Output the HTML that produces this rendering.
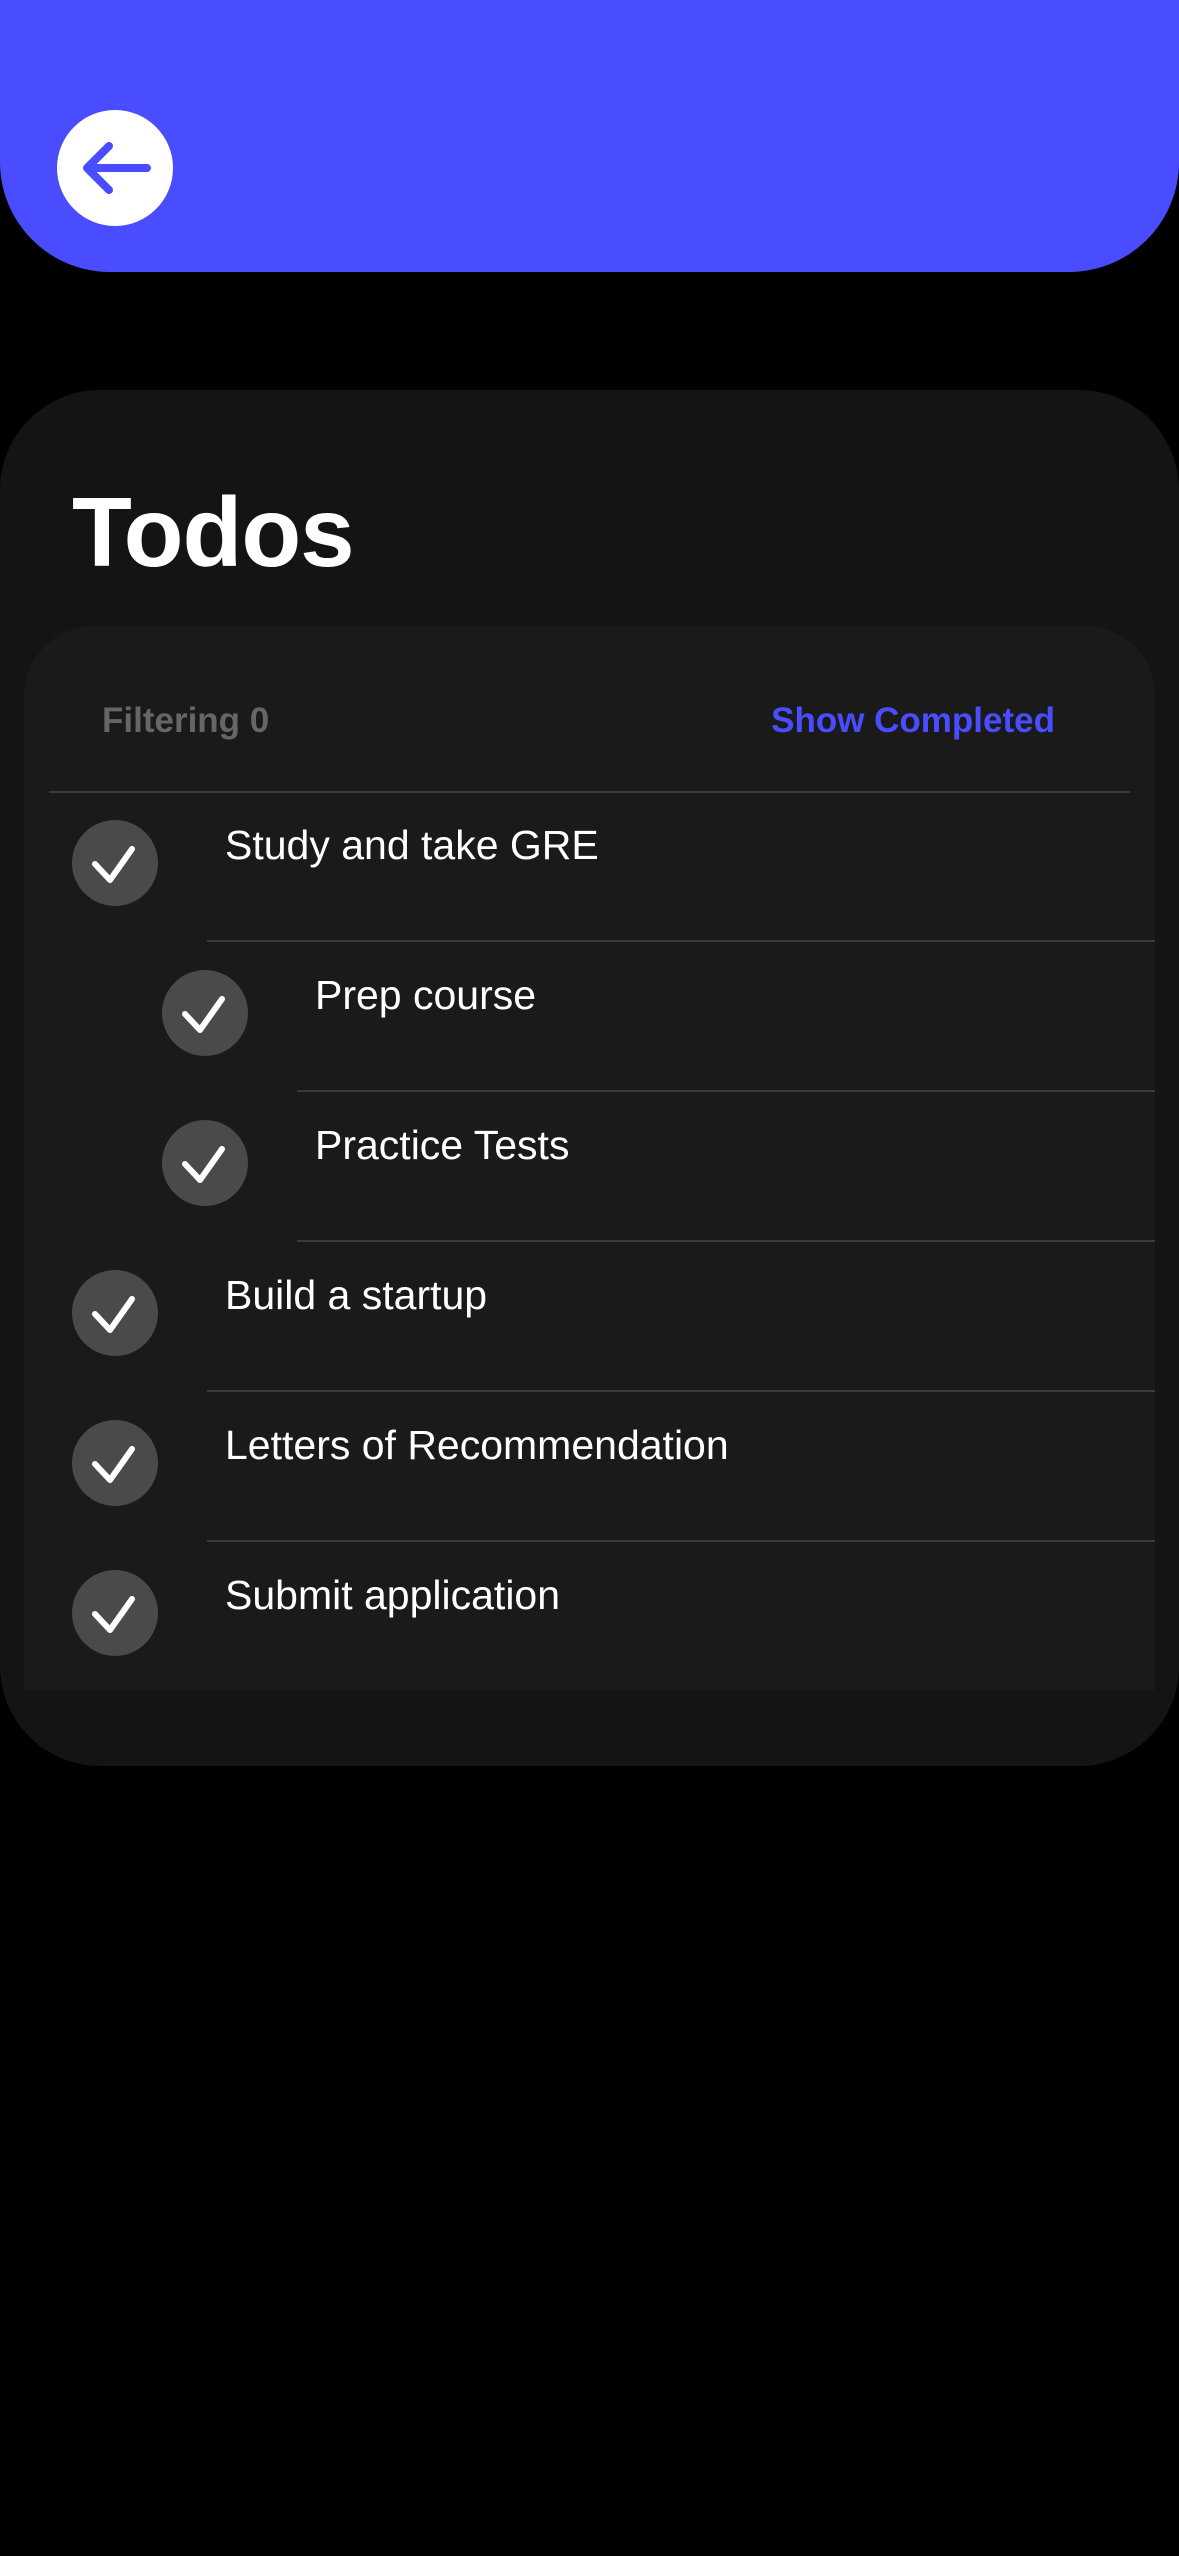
<!DOCTYPE html>
<html><head><style>
*{margin:0;padding:0;box-sizing:border-box}
body{width:1179px;height:2556px;background:#000;position:relative;overflow:hidden;font-family:"Liberation Sans",sans-serif}
.hdr{position:absolute;left:0;top:0;width:1179px;height:272px;background:#4a4dff;border-radius:0 0 110px 110px}
.back{position:absolute;left:57px;top:110px;width:116px;height:116px;border-radius:50%;background:#fff}
.card{position:absolute;left:0;top:390px;width:1179px;height:1376px;background:#141414;border-radius:100px}
.title{position:absolute;left:72px;top:476px;font-size:98px;font-weight:bold;color:#fff;letter-spacing:-1px}
.inner{position:absolute;left:24px;top:626px;width:1131px;height:1064px;background:#1a1a1a;border-radius:70px 70px 0 0}
.filt{position:absolute;left:102px;top:701px;font-size:35px;font-weight:bold;color:#666}
.show{position:absolute;right:124px;top:701px;font-size:35px;font-weight:bold;color:#4a4dff}
.div{position:absolute;height:2px;background:#3a3a3a}
.c{position:absolute;width:86px;height:86px;border-radius:50%;background:#4a4a4a}
.c svg{position:absolute;left:0;top:0}
.t{position:absolute;font-size:41px;color:#fff}
</style></head><body>
<div class="hdr"></div>
<div class="back"><svg width="116" height="116" viewBox="0 0 116 116"><path d="M30 58H90M30 58L52 36M30 58L52 80" stroke="#4a4dff" stroke-width="8" stroke-linecap="round" stroke-linejoin="round" fill="none"/></svg></div>
<div class="card"></div>
<div class="title">Todos</div>
<div class="inner"></div>
<div class="filt">Filtering 0</div>
<div class="show">Show Completed</div>
<div class="div" style="left:49px;top:791px;width:1081px"></div>

<div class="c" style="left:72px;top:820px"><svg width="86" height="86"><path d="M23 44L38 60L60 29" stroke="#fff" stroke-width="6" stroke-linecap="round" stroke-linejoin="round" fill="none"/></svg></div>
<div class="t" style="left:225px;top:822px">Study and take GRE</div>
<div class="div" style="left:207px;top:940px;width:948px"></div>

<div class="c" style="left:162px;top:970px"><svg width="86" height="86"><path d="M23 44L38 60L60 29" stroke="#fff" stroke-width="6" stroke-linecap="round" stroke-linejoin="round" fill="none"/></svg></div>
<div class="t" style="left:315px;top:972px">Prep course</div>
<div class="div" style="left:297px;top:1090px;width:858px"></div>

<div class="c" style="left:162px;top:1120px"><svg width="86" height="86"><path d="M23 44L38 60L60 29" stroke="#fff" stroke-width="6" stroke-linecap="round" stroke-linejoin="round" fill="none"/></svg></div>
<div class="t" style="left:315px;top:1122px">Practice Tests</div>
<div class="div" style="left:297px;top:1240px;width:858px"></div>

<div class="c" style="left:72px;top:1270px"><svg width="86" height="86"><path d="M23 44L38 60L60 29" stroke="#fff" stroke-width="6" stroke-linecap="round" stroke-linejoin="round" fill="none"/></svg></div>
<div class="t" style="left:225px;top:1272px">Build a startup</div>
<div class="div" style="left:207px;top:1390px;width:948px"></div>

<div class="c" style="left:72px;top:1420px"><svg width="86" height="86"><path d="M23 44L38 60L60 29" stroke="#fff" stroke-width="6" stroke-linecap="round" stroke-linejoin="round" fill="none"/></svg></div>
<div class="t" style="left:225px;top:1422px">Letters of Recommendation</div>
<div class="div" style="left:207px;top:1540px;width:948px"></div>

<div class="c" style="left:72px;top:1570px"><svg width="86" height="86"><path d="M23 44L38 60L60 29" stroke="#fff" stroke-width="6" stroke-linecap="round" stroke-linejoin="round" fill="none"/></svg></div>
<div class="t" style="left:225px;top:1572px">Submit application</div>
</body></html>
